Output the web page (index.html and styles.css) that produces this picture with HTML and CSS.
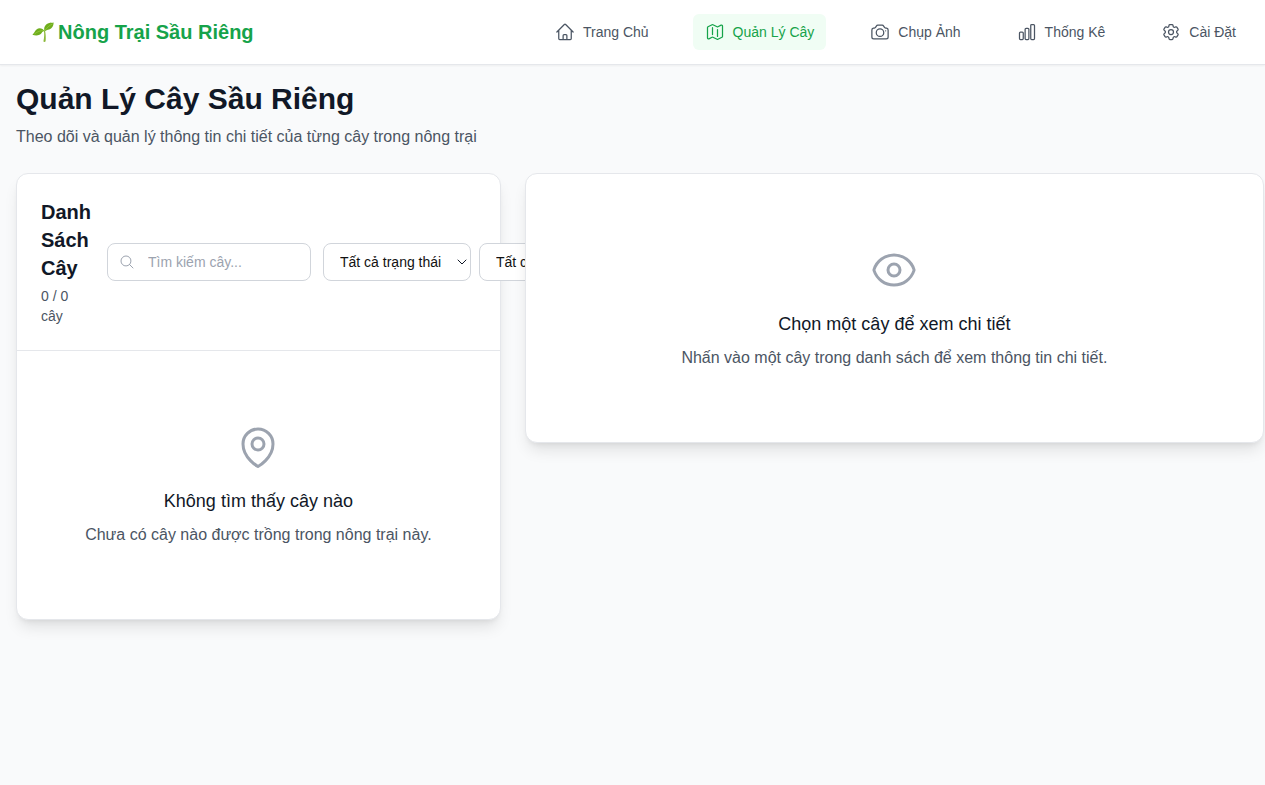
FILE: index.html
```html
<!DOCTYPE html>
<html lang="vi">
<head>
<meta charset="utf-8">
<meta name="viewport" content="width=device-width, initial-scale=1">
<title>Nông Trại Sầu Riêng</title>
<link rel="stylesheet" href="styles.css">
</head>
<body>
<header class="topbar">
  <a class="brand" href="#">
    <svg class="brand-icon" viewBox="0 0 22 22" aria-hidden="true">
      <path d="M12 10.300C12.400 13 12.300 16.500 11.400 20.500C12.200 21.100 13.200 21 13.600 20.300C14 17 13.700 12.500 13 9.500Z" fill="#8bb83a"/>
      <path d="M12.700 10.500C11.300 6.800 13 3.300 16.500 2.200C18.700 1.500 20.600 2 21.700 1.500C21.500 5 20 7.600 17.200 8.500C15.400 9.100 13.800 9 12.700 10.500Z" fill="#6fae1e"/>
      <path d="M12.700 10.500C10.800 7.200 7.200 6.500 4.500 8.400C2.600 9.800 2.200 12.300.4 13.700C4 15.300 8.200 14.500 9.800 11.800C10.500 10.600 11.500 10 12.700 10.500Z" fill="#6fae1e"/>
      <path d="M12.900 9.500C15 6.500 17.500 4.300 20.500 3M11.500 9.700C8.500 9.500 5.500 10.500 2.500 13" fill="none" stroke="#96c93d" stroke-width=".8"/>
    </svg>
    <span>Nông Trại Sầu Riêng</span>
  </a>
  <nav class="nav">
    <a class="nav-link" href="#">
      <svg class="icon" viewBox="0 0 24 24" aria-hidden="true"><path d="M2.250 12l8.954-8.955c.44-.439 1.152-.439 1.591 0L21.750 12M4.500 9.750v10.125c0 .621.504 1.125 1.125 1.125H9.750v-4.875c0-.621.504-1.125 1.125-1.125h2.250c.621 0 1.125.504 1.125 1.125V21h4.125c.621 0 1.125-.504 1.125-1.125V9.750M8.250 21h8.250"/></svg>
      Trang Chủ
    </a>
    <a class="nav-link active" href="#" aria-current="page">
      <svg class="icon" viewBox="0 0 24 24" aria-hidden="true"><path d="M9 6.750V15m6-6v8.250m.503 3.498l4.875-2.437c.381-.19.622-.58.622-1.006V4.820c0-.836-.88-1.380-1.628-1.006l-3.869 1.934c-.317.159-.69.159-1.006 0L9.503 3.252a1.125 1.125 0 00-1.006 0L3.622 5.689C3.240 5.880 3 6.270 3 6.695V19.180c0 .836.88 1.380 1.628 1.006l3.869-1.934c.317-.159.69-.159 1.006 0l4.994 2.497c.317.158.69.158 1.006 0z"/></svg>
      Quản Lý Cây
    </a>
    <a class="nav-link" href="#">
      <svg class="icon" viewBox="0 0 24 24" aria-hidden="true"><path d="M6.827 6.175A2.310 2.310 0 015.186 7.230c-.38.054-.757.112-1.134.175C2.999 7.580 2.250 8.507 2.250 9.574V18a2.250 2.250 0 002.250 2.250h15A2.250 2.250 0 0021.750 18V9.574c0-1.067-.75-1.994-1.802-2.169a47.865 47.865 0 00-1.134-.175 2.310 2.310 0 01-1.640-1.055l-.822-1.316a2.192 2.192 0 00-1.736-1.039 48.774 48.774 0 00-5.232 0 2.192 2.192 0 00-1.736 1.039l-.821 1.316z"/><path d="M16.500 12.750a4.500 4.500 0 11-9 0 4.500 4.500 0 019 0zM18.750 10.500h.008v.008h-.008V10.500z"/></svg>
      Chụp Ảnh
    </a>
    <a class="nav-link" href="#">
      <svg class="icon" viewBox="0 0 24 24" aria-hidden="true"><path d="M3 13.125C3 12.504 3.504 12 4.125 12h2.250c.621 0 1.125.504 1.125 1.125v6.750C7.500 20.496 6.996 21 6.375 21h-2.250A1.125 1.125 0 013 19.875v-6.750zM9.750 8.625c0-.621.504-1.125 1.125-1.125h2.250c.621 0 1.125.504 1.125 1.125v11.250c0 .621-.504 1.125-1.125 1.125h-2.250a1.125 1.125 0 01-1.125-1.125V8.625zM16.500 4.125c0-.621.504-1.125 1.125-1.125h2.250C20.496 3 21 3.504 21 4.125v15.750c0 .621-.504 1.125-1.125 1.125h-2.250a1.125 1.125 0 01-1.125-1.125V4.125z"/></svg>
      Thống Kê
    </a>
    <a class="nav-link" href="#">
      <svg class="icon" viewBox="0 0 24 24" aria-hidden="true"><path d="M9.594 3.940c.09-.542.56-.94 1.110-.94h2.593c.55 0 1.020.398 1.110.94l.213 1.281c.063.374.313.686.645.87.074.04.147.083.22.127.324.196.72.257 1.075.124l1.217-.456a1.125 1.125 0 011.370.49l1.296 2.247a1.125 1.125 0 01-.26 1.431l-1.003.827c-.293.24-.438.613-.431.992a6.759 6.759 0 010 .255c-.007.378.138.75.43.99l1.005.828c.424.35.534.954.26 1.430l-1.298 2.247a1.125 1.125 0 01-1.369.491l-1.217-.456c-.355-.133-.75-.072-1.076.124a6.570 6.570 0 01-.22.128c-.331.183-.581.495-.644.869l-.213 1.280c-.09.543-.56.941-1.110.941h-2.594c-.55 0-1.020-.398-1.110-.94l-.213-1.281c-.062-.374-.312-.686-.644-.87a6.520 6.520 0 01-.22-.127c-.325-.196-.72-.257-1.076-.124l-1.217.456a1.125 1.125 0 01-1.369-.49l-1.297-2.247a1.125 1.125 0 01.26-1.431l1.004-.827c.292-.24.437-.613.43-.992a6.932 6.932 0 010-.255c.007-.378-.138-.75-.43-.99l-1.004-.828a1.125 1.125 0 01-.26-1.430l1.297-2.247a1.125 1.125 0 011.370-.491l1.216.456c.356.133.751.072 1.076-.124.072-.044.146-.087.22-.128.332-.183.582-.495.644-.869l.214-1.281z"/><path d="M15 12a3 3 0 11-6 0 3 3 0 016 0z"/></svg>
      Cài Đặt
    </a>
  </nav>
</header>

<main class="page">
  <div class="page-head">
    <h1>Quản Lý Cây Sầu Riêng</h1>
    <p>Theo dõi và quản lý thông tin chi tiết của từng cây trong nông trại</p>
  </div>
  <div class="columns">
    <section class="card list-card">
      <div class="card-head">
        <div class="list-title">
          <h2>Danh Sách Cây</h2>
          <p>0 / 0 cây</p>
        </div>
        <div class="filters">
          <label class="search">
            <svg class="icon search-icon" viewBox="0 0 24 24" aria-hidden="true"><path d="M21 21l-5.197-5.197m0 0A7.500 7.500 0 105.196 5.196a7.500 7.500 0 0010.607 10.607z"/></svg>
            <input type="text" placeholder="Tìm kiếm cây..." aria-label="Tìm kiếm cây">
          </label>
          <div class="selects">
            <div class="select">
              <select aria-label="Trạng thái"><option>Tất cả trạng thái</option></select>
              <svg class="icon chevron" viewBox="0 0 10 6" aria-hidden="true"><path d="M1 1l4 4 4-4"/></svg>
            </div>
            <div class="select">
              <select aria-label="Loại"><option>Tất cả</option></select>
              <svg class="icon chevron" viewBox="0 0 10 6" aria-hidden="true"><path d="M1 1l4 4 4-4"/></svg>
            </div>
          </div>
        </div>
      </div>
      <div class="empty">
        <svg class="icon empty-icon" viewBox="0 0 24 24" aria-hidden="true"><path d="M15 10.500a3 3 0 11-6 0 3 3 0 016 0z"/><path d="M19.500 10.500c0 7.142-7.500 11.250-7.500 11.250S4.500 17.642 4.500 10.500a7.500 7.500 0 1115 0z"/></svg>
        <h3>Không tìm thấy cây nào</h3>
        <p>Chưa có cây nào được trồng trong nông trại này.</p>
      </div>
    </section>
    <section class="card detail-card">
      <div class="empty">
        <svg class="icon empty-icon" viewBox="0 0 24 24" aria-hidden="true"><path d="M2.036 12.322a1.012 1.012 0 010-.639C3.423 7.510 7.360 4.500 12 4.500c4.638 0 8.573 3.007 9.963 7.178.07.207.07.431 0 .639C20.577 16.490 16.640 19.500 12 19.500c-4.638 0-8.573-3.007-9.963-7.178z"/><path d="M15 12a3 3 0 11-6 0 3 3 0 016 0z"/></svg>
        <h3>Chọn một cây để xem chi tiết</h3>
        <p>Nhấn vào một cây trong danh sách để xem thông tin chi tiết.</p>
      </div>
    </section>
  </div>
</main>
</body>
</html>
```

FILE: styles.css
```css
* {
  box-sizing: border-box;
}

body {
  margin: 0;
  min-height: 100vh;
  overflow-x: hidden;
  background: #f9fafb;
  color: #111827;
  font-family: "Liberation Sans", Arial, sans-serif;
  font-size: 16px;
  line-height: 24px;
}

h1,
h2,
h3,
p {
  margin: 0;
}

.icon {
  flex: none;
  width: 20px;
  height: 20px;
  fill: none;
  stroke: currentColor;
  stroke-width: 1.5;
  stroke-linecap: round;
  stroke-linejoin: round;
}

.topbar {
  display: flex;
  align-items: center;
  justify-content: space-between;
  min-height: 65px;
  padding: 0 17px 0 32px;
  background: #fff;
  border-bottom: 1px solid #e5e7eb;
  box-shadow: 0 1px 2px rgba(0, 0, 0, 0.05);
}

.brand {
  display: flex;
  align-items: center;
  gap: 4px;
  color: #16a34a;
  font-size: 20px;
  font-weight: 700;
  line-height: 28px;
  text-decoration: none;
}

.brand-icon {
  width: 22px;
  height: 22px;
}

.nav {
  display: flex;
  gap: 32px;
}

.nav-link {
  display: flex;
  align-items: center;
  gap: 8px;
  padding: 8px 12px;
  border-radius: 6px;
  color: #4b5563;
  font-size: 14px;
  line-height: 20px;
  text-decoration: none;
}

.nav-link.active {
  background: #f0fdf4;
  color: #16a34a;
}

.page {
  padding: 16px 1px 16px 16px;
}

.page-head {
  margin-bottom: 24px;
}

.page-head h1 {
  margin-bottom: 8px;
  font-size: 30px;
  line-height: 36px;
}

.page-head p {
  color: #4b5563;
}

.columns {
  display: grid;
  grid-template-columns: repeat(5, minmax(0, 1fr));
  align-items: start;
  gap: 24px;
}

.card {
  background: #fff;
  border: 1px solid #e5e7eb;
  border-radius: 12px;
  box-shadow: 0 10px 15px -3px rgba(0, 0, 0, 0.1), 0 4px 6px -4px rgba(0, 0, 0, 0.1);
}

.list-card {
  grid-column: span 2;
}

/* Stacks above the filters that run past the list card. */
.detail-card {
  position: relative;
  z-index: 1;
  grid-column: span 3;
}

.card-head {
  display: flex;
  align-items: center;
  gap: 16px;
  padding: 24px;
  border-bottom: 1px solid #e5e7eb;
}

.list-title h2 {
  margin-bottom: 4px;
  font-size: 20px;
  line-height: 28px;
}

.list-title p {
  color: #4b5563;
  font-size: 14px;
  line-height: 20px;
}

.filters {
  display: flex;
  flex: none;
  gap: 12px;
}

.search {
  position: relative;
  display: flex;
  align-items: center;
}

.search-icon {
  position: absolute;
  left: 12px;
  width: 16px;
  height: 16px;
  color: #9ca3af;
}

.search input,
.select select {
  border: 1px solid #d1d5db;
  border-radius: 8px;
  background: #fff;
  font-family: inherit;
  font-size: 14px;
  line-height: 20px;
}

.search input {
  width: 204px;
  padding: 8px 16px 8px 40px;
  color: #111827;
}

.search input::placeholder {
  color: #9ca3af;
}

.selects {
  display: flex;
  gap: 8px;
}

.select {
  position: relative;
  display: flex;
  align-items: center;
}

.select select {
  appearance: none;
  width: 148px;
  height: 38px;
  padding: 8px 16px;
  color: #111;
}

.chevron {
  position: absolute;
  right: 4px;
  width: 10px;
  height: 6px;
  stroke-width: 1;
  pointer-events: none;
}

.empty {
  display: flex;
  flex-direction: column;
  align-items: center;
  padding: 72px 24px;
  text-align: center;
}

.empty-icon {
  width: 48px;
  height: 48px;
  margin-bottom: 16px;
  color: #9ca3af;
}

.empty h3 {
  margin-bottom: 8px;
  font-size: 18px;
  font-weight: 500;
  line-height: 28px;
}

.empty p {
  color: #4b5563;
}
```
